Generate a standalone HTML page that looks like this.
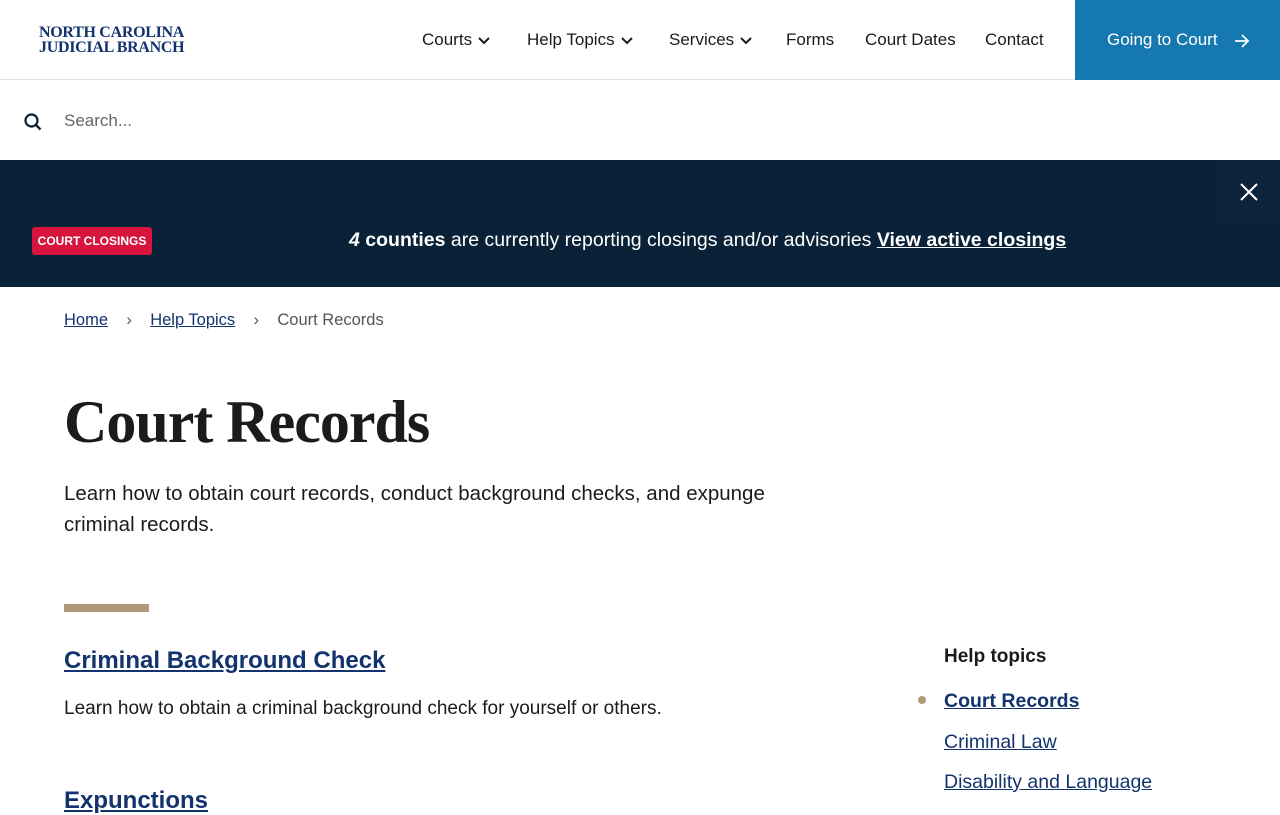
<!DOCTYPE html>
<html><head><meta charset="utf-8"><style>
*{margin:0;padding:0;box-sizing:border-box}
body{width:1280px;height:800px;overflow:hidden;font-family:"Liberation Sans",sans-serif;background:#fff;color:#1b1b1b;position:relative}
.hdr{position:absolute;top:0;left:0;width:1280px;height:80px;border-bottom:1px solid #e3e3e3}
.logo{position:absolute;left:39px;top:25px;font-family:"Liberation Serif",serif;font-weight:bold;color:#12336e;font-size:16px;line-height:15px;letter-spacing:-0.3px}
.nav{position:absolute;top:30px;font-size:17px;color:#1b1b1b}
.nav svg{vertical-align:middle;margin-left:6px}
.go{position:absolute;left:1075px;top:0;width:205px;height:80px;background:#1578b0;color:#fff;font-size:17px;padding:30px 0 0 32px}
.search{position:absolute;top:81px;left:0;width:1280px;height:79px}
.banner{position:absolute;top:160px;left:0;width:1280px;height:127px;background:#0a2237}
.x{position:absolute;right:0;top:0;width:62px;height:62px;background:#0c2439}
.tag{position:absolute;left:32px;top:227px;width:120px;height:28px;background:#d6143d;color:#fff;font-weight:bold;font-size:12px;border-radius:3px;text-align:center;line-height:28px}
.msg{position:absolute;top:227px;left:349px;color:#fff;font-size:19.5px;line-height:26px}
.msg a{color:#fff;font-weight:bold}
a{color:#12336e}
.crumb{position:absolute;top:311px;left:64px;font-size:16.5px;color:#555}
h1{position:absolute;top:388px;left:64px;font-family:"Liberation Serif",serif;font-size:60px;font-weight:bold;letter-spacing:-1px;color:#1b1b1b}
.lead{position:absolute;top:478px;left:64px;width:770px;font-size:20.5px;line-height:31px}
.bar{position:absolute;top:604px;left:64px;width:85px;height:8px;background:#b29a78}
.h2{position:absolute;left:64px;font-size:24px;font-weight:bold}
.p{position:absolute;top:698px;left:64px;font-size:19px}
.side{position:absolute;left:944px;font-size:19.5px}
</style></head><body>
<div class="hdr">
<div class="logo">NORTH CAROLINA<br>JUDICIAL BRANCH</div>
<div class="nav" style="left:422px">Courts<svg width="12" height="8"><path d="M1 1l5 5 5-5" stroke="#1b1b1b" stroke-width="2" fill="none"/></svg></div>
<div class="nav" style="left:527px">Help Topics<svg width="12" height="8"><path d="M1 1l5 5 5-5" stroke="#1b1b1b" stroke-width="2" fill="none"/></svg></div>
<div class="nav" style="left:669px">Services<svg width="12" height="8"><path d="M1 1l5 5 5-5" stroke="#1b1b1b" stroke-width="2" fill="none"/></svg></div>
<div class="nav" style="left:786px">Forms</div>
<div class="nav" style="left:865px">Court Dates</div>
<div class="nav" style="left:985px">Contact</div>
<div class="go">Going to Court <svg width="16" height="14" style="vertical-align:middle;margin-left:12px"><path d="M1 7h13M8 1l6 6-6 6" stroke="#fff" stroke-width="1.8" fill="none"/></svg></div>
</div>
<div class="search">
<svg width="18" height="18" style="position:absolute;left:24px;top:32px"><circle cx="7.5" cy="7.5" r="6" stroke="#0a2237" stroke-width="2.2" fill="none"/><path d="M12 12l4.5 4.5" stroke="#0a2237" stroke-width="2.4"/></svg>
<div style="position:absolute;left:64px;top:30px;font-size:17px;color:#666">Search...</div>
</div>
<div class="banner"><div class="x"><svg width="20" height="20" style="position:absolute;left:21px;top:22px"><path d="M2 2l16 16M18 2L2 18" stroke="#fff" stroke-width="2"/></svg></div></div>
<div class="tag">COURT CLOSINGS</div>
<div class="msg"><b><i>4</i> counties</b> are currently reporting closings and/or advisories <a href="#">View active closings</a></div>
<div class="crumb"><a href="#">Home</a>&nbsp;&nbsp;&nbsp;&nbsp;›&nbsp;&nbsp;&nbsp;&nbsp;<a href="#">Help Topics</a>&nbsp;&nbsp;&nbsp;&nbsp;›&nbsp;&nbsp;&nbsp;&nbsp;Court Records</div>
<h1>Court Records</h1>
<div class="lead">Learn how to obtain court records, conduct background checks, and expunge criminal records.</div>
<div class="bar"></div>
<div class="h2" style="top:647px"><a href="#">Criminal Background Check</a></div>
<div class="p">Learn how to obtain a criminal background check for yourself or others.</div>
<div class="h2" style="top:787px"><a href="#">Expunctions</a></div>
<div class="side" style="top:646px;font-weight:bold;font-size:19px">Help topics</div>
<div style="position:absolute;left:918px;top:696px;width:8px;height:8px;border-radius:50%;background:#b29a78"></div>
<div class="side" style="top:690px;font-weight:bold"><a href="#">Court Records</a></div>
<div class="side" style="top:731px"><a href="#">Criminal Law</a></div>
<div class="side" style="top:771px"><a href="#">Disability and Language</a></div>
</body></html>
